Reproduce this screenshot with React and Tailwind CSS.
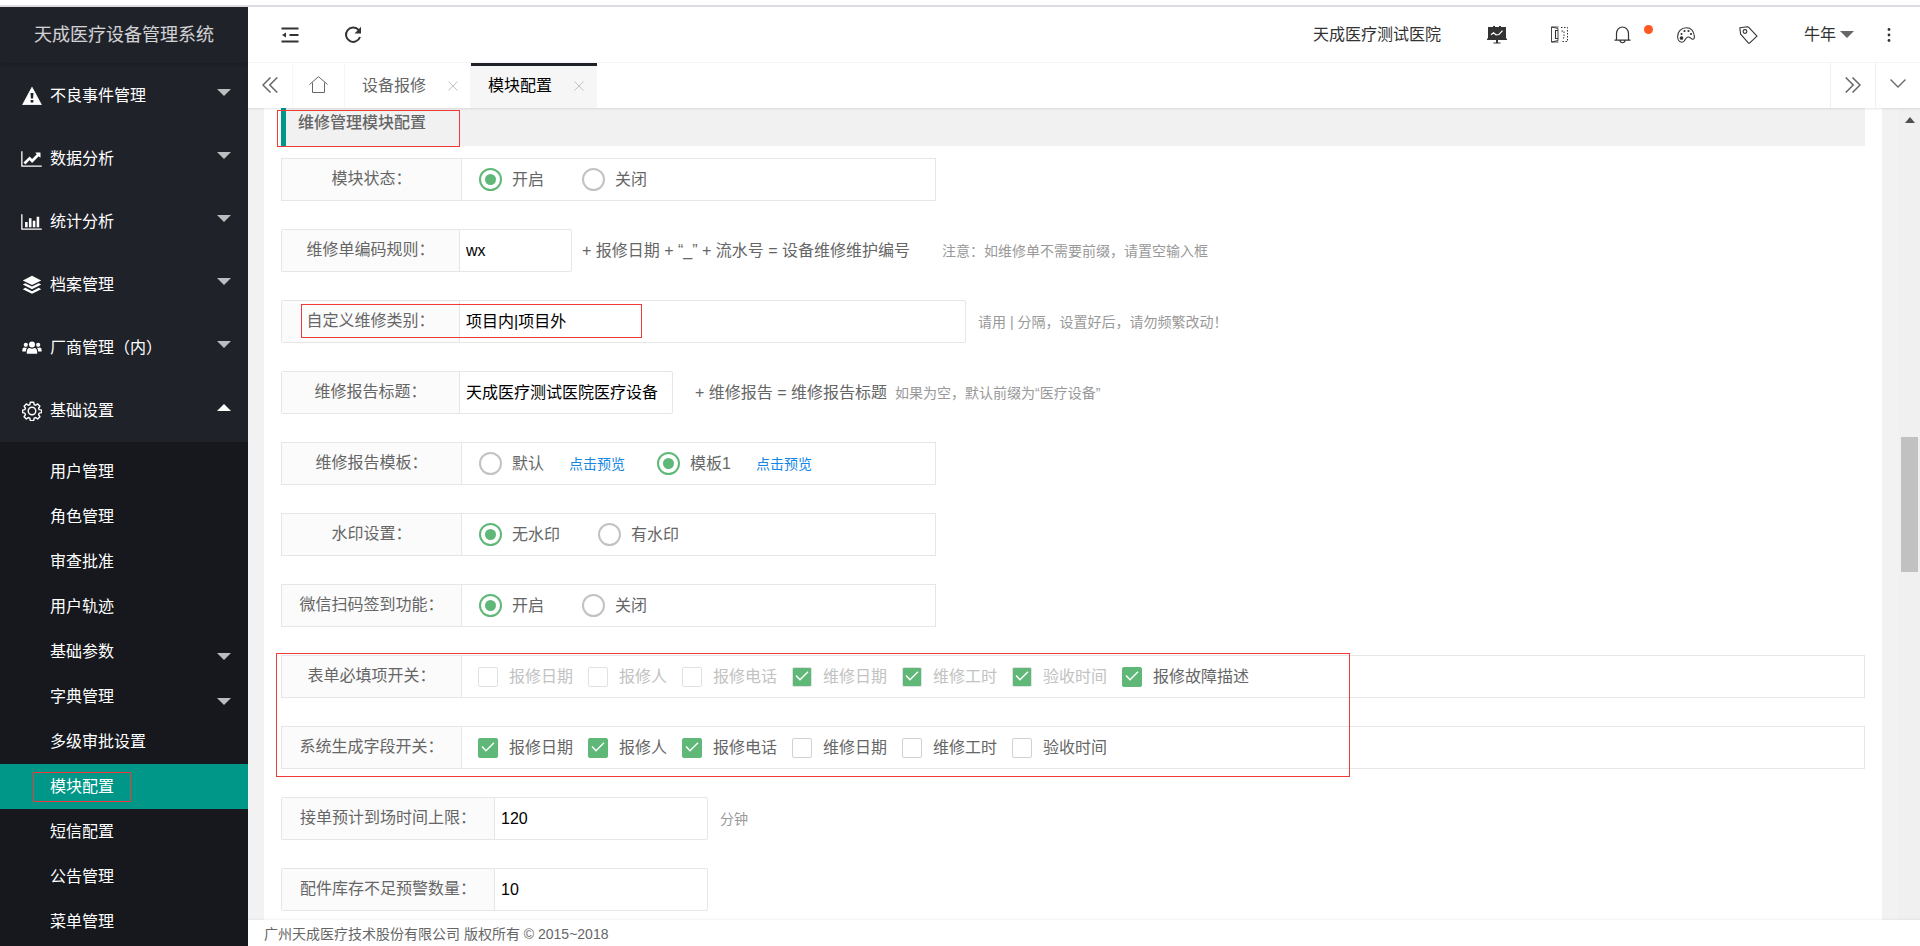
import { useState } from "react";
import clsx from "clsx";

const svgBase = { fill: "none", stroke: "currentColor" };

// Solid sidebar icons share the 1792/2048 grid
const SolidIcon = ({ viewBox, d, className = "w-[18px] h-[18px]" }) => (
  <svg viewBox={viewBox} className={className} fill="currentColor" aria-hidden="true">
    <path d={d} />
  </svg>
);

const WarningIcon = () => (
  <svg viewBox="0 0 20 18" className="w-5 h-[18px]" aria-hidden="true">
    <path d="M10 0.3 19.4 17.7H0.6Z" fill="currentColor" stroke="currentColor" strokeWidth="0.8" strokeLinejoin="round" />
    <path d="M8.5 6h3l-.4 5.5H8.9zM8.6 13h2.8v2.5H8.6z" fill="#20222a" />
  </svg>
);

const LineChartIcon = () => (
  <SolidIcon
    viewBox="0 0 2048 1792"
    className="w-[21px] h-[18px]"
    d="M2048 1536v128H0V128h128v1408h1920zM1920 288v435q0 21-19.5 29.5T1865 745l-121-121-633 633q-10 10-23 10t-23-10L832 1024l-416 416-192-192 585-585q10-10 23-10t23 10l233 233 464-464-121-121q-16-16-7.5-35.5T1453 256h435q14 0 23 9t9 23z"
  />
);

const BarChartIcon = () => (
  <SolidIcon
    viewBox="0 0 2048 1792"
    className="w-[21px] h-[18px]"
    d="M640 896v512H384V896h256zm384-384v896H768V512h256zm1024 1024v128H0V128h128v1408h1920zM1408 768v640h-256V768h256zm384-384v1024h-256V384h256z"
  />
);

const LayersIcon = () => (
  <svg viewBox="0 0 20 20" className="w-5 h-5" fill="currentColor" aria-hidden="true">
    <path d="M10 0.8 19.2 5.4 10 10 .8 5.4z" />
    <path d="M3.3 8.2 10 11.6l6.7-3.4 2.5 1.4L10 14.2.8 9.6z" />
    <path d="M3.3 12.8 10 16.2l6.7-3.4 2.5 1.4L10 18.8.8 14.2z" />
  </svg>
);

const UsersIcon = () => (
  <svg viewBox="0 0 20 14" className="w-5 h-[14px]" fill="currentColor" aria-hidden="true">
    <circle cx="10" cy="3.4" r="3" />
    <circle cx="3.8" cy="3.8" r="2.1" />
    <circle cx="16.2" cy="3.8" r="2.1" />
    <path d="M4.8 12.8c-.3-4 1.2-5.7 2.8-5.7 1.6 1 3.2 1 4.8 0 1.6 0 3.1 1.7 2.8 5.7z" />
    <path d="M.3 10.4C.1 7.9.9 6.5 2.2 6.5c1 .6 2 .7 3.3.1C4.3 7.7 3.9 9 3.9 10.4zM19.7 10.4c.2-2.5-.6-3.9-1.9-3.9-1 .6-2 .7-3.3.1 1.2 1.1 1.6 2.4 1.6 3.8z" />
  </svg>
);

const GearIcon = () => (
  <svg viewBox="0 0 24 24" className="w-5 h-5" {...svgBase} strokeWidth="1.7" strokeLinejoin="round" aria-hidden="true">
    <circle cx="12" cy="12" r="4.5" />
    <path d="M10 1.5h4l.6 2.9 1.7.7 2.5-1.6 2.7 2.7-1.6 2.5.7 1.7 2.9.6v3l-2.9.6-.7 1.7 1.6 2.5-2.7 2.7-2.5-1.6-1.7.7-.6 2.900h-4l-.6-2.9-1.7-.7-2.5 1.6-2.7-2.7 1.6-2.5-.7-1.7L.7 14v-3l2.7-.6.7-1.7-1.6-2.5 2.7-2.7 2.5 1.6 1.7-.7z" />
  </svg>
);

const Caret = ({ up = false, className = "text-[#bcbdbf]" }) => (
  <svg viewBox="0 0 14 7" className={clsx("w-[14px] h-[7px]", className)} fill="currentColor" aria-hidden="true">
    <path d={up ? "M0 7h14L7 0z" : "M0 0h14L7 7z"} />
  </svg>
);

const CloseIcon = () => (
  <svg viewBox="0 0 10 10" className="w-[10px] h-[10px] text-[#c2c2c2]" {...svgBase} aria-hidden="true">
    <path d="M.5.5l9 9M9.5.5l-9 9" />
  </svg>
);

const menus = [
  { label: "不良事件管理", icon: <WarningIcon /> },
  { label: "数据分析", icon: <LineChartIcon /> },
  { label: "统计分析", icon: <BarChartIcon /> },
  { label: "档案管理", icon: <LayersIcon /> },
  { label: "厂商管理（内）", icon: <UsersIcon /> },
  { label: "基础设置", icon: <GearIcon />, open: true },
];

const subMenus = [
  { label: "用户管理" },
  { label: "角色管理" },
  { label: "审查批准" },
  { label: "用户轨迹" },
  { label: "基础参数", children: true },
  { label: "字典管理", children: true },
  { label: "多级审批设置" },
  { label: "模块配置", active: true },
  { label: "短信配置" },
  { label: "公告管理" },
  { label: "菜单管理" },
];

const Sidebar = () => (
  <aside className="w-[248px] shrink-0 bg-[#20222a] text-white overflow-hidden">
    <div className="h-14 flex items-center justify-center text-lg text-white/80 shadow-[0_1px_2px_rgba(0,0,0,0.15)]">
      天成医疗设备管理系统
    </div>
    <nav className="pt-px">
      {menus.map((menu) => (
        <button key={menu.label} className="w-full h-[63px] pl-[21px] pr-[17px] flex items-center text-left">
          <span className="w-[21px] mr-2 flex justify-center">{menu.icon}</span>
          <span className="flex-1">{menu.label}</span>
          <span className="pb-1.5">
            {menu.open ? <Caret up className="text-white" /> : <Caret />}
          </span>
        </button>
      ))}
      <ul className="bg-[#16181d] pt-[7px] pb-20">
        {subMenus.map((item) => (
          <li key={item.label}>
            <a
              href="#"
              className={clsx(
                "h-[45px] pl-[50px] pr-[17px] flex items-center justify-between",
                item.active && "bg-[#009688]"
              )}
            >
              <span className="relative">
                {item.label}
                {item.active && (
                  <span className="absolute -inset-x-[17px] -inset-y-[3px] border border-[#f03a3a]"></span>
                )}
              </span>
              {item.children && (
                <span className="pt-2.5">
                  <Caret />
                </span>
              )}
            </a>
          </li>
        ))}
      </ul>
    </nav>
  </aside>
);

const HeaderButton = ({ label, children }) => (
  <button aria-label={label} className="w-[63px] h-full flex items-center justify-center">
    {children}
  </button>
);

const Header = () => (
  <header className="h-14 flex items-center bg-white border-b border-[#f6f6f6] text-[#333]">
    <button aria-label="侧边伸缩" className="w-[84px] h-full flex items-center justify-center">
      <svg viewBox="0 0 18 16" className="w-[18px] h-4" {...svgBase} strokeWidth="2" aria-hidden="true">
        <path d="M.5 1.5h17M8.5 8h9M.5 14.5h17" />
        <path d="M1 8l4-2.5v5z" fill="currentColor" stroke="none" />
      </svg>
    </button>
    <button aria-label="刷新" className="w-[42px] h-full flex items-center justify-center">
      <svg viewBox="0 0 18 18" className="w-[18px] h-[18px]" {...svgBase} strokeWidth="2" aria-hidden="true">
        <path d="M14.8 4.2A7.2 7.2 0 1 0 16 11" />
        <path d="M17 .8v6.7h-6.5z" fill="currentColor" stroke="none" />
      </svg>
    </button>

    <div className="ml-auto h-full flex items-center">
      <a href="#" className="pr-6">
        天成医疗测试医院
      </a>
      <HeaderButton label="大屏">
        <svg viewBox="0 0 20 18" className="w-5 h-[18px]" aria-hidden="true">
          <path d="M6 0h2v1h4V0h2v1h5v11.5h1v1.5h-9v2.5h2.5v1H6.5v-1H9V14H0v-1.5h1V1h5z" fill="#333" />
          <path d="M4 8.8l2.5-2 2.5 2 3-.3 3.500-3.800" stroke="#fff" fill="none" strokeWidth="1.2" />
        </svg>
      </HeaderButton>
      <HeaderButton label="手册">
        <svg viewBox="0 0 17 17" className="w-[17px] h-[17px]" {...svgBase} aria-hidden="true">
          <path d="M.5 1l6.500 1.500v12L.5 16zM.5 1h7M.5 16h7" strokeWidth="0.9" />
          <path d="M7 4.500H4.500v8H7" strokeWidth="1.1" />
          <path d="M10 1.500h6.500v14H10M10.500 5H13v7h-2.500" strokeDasharray="1.5 1.5" />
        </svg>
      </HeaderButton>
      <HeaderButton label="消息">
        <span className="relative">
          <svg viewBox="0 0 17 18" className="w-[17px] h-[18px]" {...svgBase} strokeWidth="1.2" aria-hidden="true">
            <path d="M2.500 14V7.500a6 6.500 0 0 1 12 0V14M.5 14.200h16M6 14.500c.3 3 4.700 3 5 0" />
          </svg>
          <span className="absolute -right-[22px] -top-px w-[9px] h-[9px] rounded-full bg-[#ff5722]"></span>
        </span>
      </HeaderButton>
      <HeaderButton label="主题">
        <svg viewBox="0 0 18 16" className="w-[18px] h-4" {...svgBase} strokeWidth="1.1" aria-hidden="true">
          <path d="M9.500.8C4 .8.6 5 .6 9.500c0 3.500 2 5.700 4.400 5.700 3.500 0 2.500-4.700 6-5.200 2.500-.3 2.800 2.500 5 2.300C17.300 12.200 17.500 10.500 17.300 9 16.600 4 13.500.8 9.500.8z" />
          <circle cx="4.500" cy="11" r="1.300" fill="currentColor" />
          <g fill="currentColor" stroke="none">
            <circle cx="4.500" cy="7" r="1" />
            <circle cx="7.500" cy="4" r="1.100" />
            <circle cx="11.500" cy="4" r="1.100" />
            <circle cx="14" cy="7" r="1.100" />
          </g>
        </svg>
      </HeaderButton>
      <HeaderButton label="便签">
        <svg viewBox="0 0 19 18" className="w-[19px] h-[18px]" {...svgBase} strokeWidth="1.1" aria-hidden="true">
          <path d="M.8 1.800 8.500.8 10 1.600 18 10.200l-7.500 7-1 0L1.600 8.200z" strokeLinejoin="round" />
          <circle cx="6" cy="5.500" r="1.900" />
        </svg>
      </HeaderButton>
      <button className="w-[77px] h-full pl-6 flex items-center gap-1">
        牛年
        <Caret className="text-[#666]" />
      </button>
      <HeaderButton label="更多">
        <svg viewBox="0 0 4 14" className="w-1 h-[14px]" fill="#333" aria-hidden="true">
          <circle cx="2" cy="1.500" r="1.400" />
          <circle cx="2" cy="7" r="1.400" />
          <circle cx="2" cy="12.500" r="1.400" />
        </svg>
      </HeaderButton>
    </div>
  </header>
);

const Tabs = () => (
  <div className="relative z-10 h-[45px] flex bg-white text-[#666] shadow-[0_1px_2px_rgba(0,0,0,0.1)]">
    <button aria-label="向左" className="w-[45px] pb-0.5 flex items-center justify-center border-r border-[#f6f6f6]">
      <svg viewBox="0 0 16 16" className="w-4 h-4" {...svgBase} strokeWidth="1.5" aria-hidden="true">
        <path d="M8.500.5 1 8l7.500 7.500M15.300.5 7.800 8l7.500 7.500" />
      </svg>
    </button>
    <button aria-label="主页" className="w-[52px] pb-0.5 flex items-center justify-center border-r border-[#f6f6f6]">
      <svg viewBox="0 0 19 17" className="w-[19px] h-[17px]" {...svgBase} aria-hidden="true">
        <path d="M.5 8.500 9.500.7l9 7.800M3.500 6.500v10h12v-10" />
      </svg>
    </button>
    <div className="w-[126px] pl-[17px] pr-3 flex items-center justify-between border-r border-[#f6f6f6]">
      <a href="#">设备报修</a>
      <button aria-label="关闭设备报修">
        <CloseIcon />
      </button>
    </div>
    <div className="w-[126px] pl-[17px] pr-[13px] flex items-center justify-between bg-[#f6f6f6] text-black shadow-[inset_0_3px_0_#20222a]">
      <a href="#">模块配置</a>
      <button aria-label="关闭模块配置">
        <CloseIcon />
      </button>
    </div>
    <button aria-label="向右" className="ml-auto w-[45px] pb-0.5 flex items-center justify-center border-l border-[#f0f0f0]">
      <svg viewBox="0 0 16 16" className="w-4 h-4" {...svgBase} strokeWidth="1.5" aria-hidden="true">
        <path d="M.7.5 8.200 8 .7 15.500M7.500.5 15 8l-7.500 7.500" />
      </svg>
    </button>
    <button aria-label="标签操作" className="w-[45px] pb-1 flex items-center justify-center border-l border-[#f0f0f0]">
      <svg viewBox="0 0 16 9" className="w-4 h-[9px]" {...svgBase} strokeWidth="1.3" aria-hidden="true">
        <path d="M.5.5 8 8 15.500.5" />
      </svg>
    </button>
  </div>
);

// Bordered row holding radios or checkboxes
const OptionRow = ({ label, wide = false, children }) => (
  <div
    role="group"
    aria-label={label}
    className={clsx("h-[43px] flex border border-[#e6e6e6]", !wide && "w-[655px]")}
  >
    <span className="w-[180px] shrink-0 pb-0.5 flex items-center justify-center bg-[#fbfbfb] border-r border-[#e6e6e6]">
      {label}：
    </span>
    <div className="flex items-center">{children}</div>
  </div>
);

const Radio = ({ name, value, selected, onSelect }) => (
  <label className="pl-[17px] pr-[21px] flex items-center gap-[10px]">
    <input
      type="radio"
      name={name}
      checked={selected === value}
      onChange={() => onSelect(value)}
      className="appearance-none grid place-content-center w-[23px] h-[23px] rounded-full border-2 border-[#c2c2c2] checked:border-[#5fb878] checked:before:block checked:before:w-[11px] checked:before:h-[11px] checked:before:rounded-full checked:before:bg-[#5fb878]"
    />
    {value}
  </label>
);

const RadioRow = ({ label, name, options, initial }) => {
  const [selected, setSelected] = useState(initial);

  return (
    <OptionRow label={label}>
      {options.map((option) => (
        <Radio key={option} name={name} value={option} selected={selected} onSelect={setSelected} />
      ))}
    </OptionRow>
  );
};

const TemplateRow = () => {
  const [selected, setSelected] = useState("模板1");

  return (
    <OptionRow label="维修报告模板">
      {["默认", "模板1"].map((option) => (
        <div key={option} className="flex items-center">
          <Radio name="template" value={option} selected={selected} onSelect={setSelected} />
          <a href="#" className="ml-1 mr-[15px] text-sm text-[#1287e6]">
            点击预览
          </a>
        </div>
      ))}
    </OptionRow>
  );
};

const Checkbox = ({ label, checked = false, disabled = false }) => (
  <label className={clsx("mr-[15px] flex items-center gap-[11px]", disabled && "text-[#c2c2c2]")}>
    <span className="grid place-items-center">
      <input
        type="checkbox"
        defaultChecked={checked}
        disabled={disabled}
        className="peer appearance-none col-start-1 row-start-1 w-5 h-5 rounded-xs border border-[#d2d2d2] bg-white checked:bg-[#5fb878] enabled:checked:border-[#5fb878] disabled:border-[#e2e2e2]"
      />
      <svg
        viewBox="0 0 14 10"
        className="col-start-1 row-start-1 w-[14px] h-[10px] mb-0.5 hidden peer-checked:block pointer-events-none"
        fill="none"
        stroke="#fff"
        strokeWidth="1.4"
        aria-hidden="true"
      >
        <path d="M1 4.500 5 8.800 13 .8" />
      </svg>
    </span>
    {label}
  </label>
);

const InputRow = ({ id, label, value, labelClass = "w-[178px]", inputClass, children }) => (
  <div className="flex items-center">
    <div className="h-[43px] flex border border-[#e6e6e6] rounded-xs">
      <label
        htmlFor={id}
        className={clsx("pb-0.5 flex items-center justify-center bg-[#fbfbfb] border-r border-[#e6e6e6]", labelClass)}
      >
        {label}：
      </label>
      <input id={id} type="text" defaultValue={value} className={clsx("pl-1.5 text-black outline-none", inputClass)} />
    </div>
    {children}
  </div>
);

const requiredFields = [
  { label: "报修日期", disabled: true },
  { label: "报修人", disabled: true },
  { label: "报修电话", disabled: true },
  { label: "维修日期", disabled: true, checked: true },
  { label: "维修工时", disabled: true, checked: true },
  { label: "验收时间", disabled: true, checked: true },
  { label: "报修故障描述", checked: true },
];

const systemFields = [
  { label: "报修日期", checked: true },
  { label: "报修人", checked: true },
  { label: "报修电话", checked: true },
  { label: "维修日期" },
  { label: "维修工时" },
  { label: "验收时间" },
];

const RepairForm = () => (
  <form className="flex-1 min-w-0 ml-4 mr-[17px] px-[17px] bg-white text-[#666] overflow-hidden">
    <div className="relative h-[38px] mb-3 pl-3 pb-2 flex items-center bg-[#f1f1f1] border-l-[5px] border-[#009688]">
      <h2 className="font-medium">维修管理模块配置</h2>
      <span className="absolute -left-[9px] top-0.5 w-[183px] h-[37px] border border-[#f03a3a]"></span>
    </div>

    <div className="flex flex-col gap-7">
      <RadioRow label="模块状态" name="status" options={["开启", "关闭"]} initial="开启" />

      <InputRow id="prefix" label="维修单编码规则" value="wx" inputClass="w-[111px]">
        <span className="ml-[10px]">+ 报修日期 + “_” + 流水号 = 设备维修维护编号</span>
        <span className="ml-8 text-sm text-[#999]">注意：如维修单不需要前缀，请置空输入框</span>
      </InputRow>

      <div className="relative">
        <InputRow id="category" label="自定义维修类别" value="项目内|项目外" inputClass="w-[505px]">
          <span className="ml-3 text-sm text-[#999]">请用 | 分隔，设置好后，请勿频繁改动！</span>
        </InputRow>
        <span className="absolute left-5 top-1 w-[341px] h-[34px] border border-[#f03a3a] pointer-events-none"></span>
      </div>

      <InputRow id="title" label="维修报告标题" value="天成医疗测试医院医疗设备" inputClass="w-[212px]">
        <span className="ml-[22px]">+ 维修报告 = 维修报告标题</span>
        <span className="ml-2 text-sm text-[#999]">如果为空，默认前缀为“医疗设备”</span>
      </InputRow>

      <TemplateRow />
      <RadioRow label="水印设置" name="watermark" options={["无水印", "有水印"]} initial="无水印" />
      <RadioRow label="微信扫码签到功能" name="wechat" options={["开启", "关闭"]} initial="开启" />

      <div className="relative flex flex-col gap-7">
        <OptionRow label="表单必填项开关" wide>
          <div className="pl-4 flex">
            {requiredFields.map((field) => (
              <Checkbox key={field.label} {...field} />
            ))}
          </div>
        </OptionRow>
        <OptionRow label="系统生成字段开关" wide>
          <div className="pl-4 flex">
            {systemFields.map((field) => (
              <Checkbox key={field.label} {...field} />
            ))}
          </div>
        </OptionRow>
        <span className="absolute -left-[5px] -top-0.5 w-[1074px] h-[124px] border border-[#f03a3a] pointer-events-none"></span>
      </div>

      <InputRow id="arrive" label="接单预计到场时间上限" value="120" labelClass="w-[213px]" inputClass="w-[212px]">
        <span className="ml-3 text-sm text-[#999]">分钟</span>
      </InputRow>
      <InputRow id="stock" label="配件库存不足预警数量" value="10" labelClass="w-[213px]" inputClass="w-[212px]" />
    </div>
  </form>
);

const ScrollTrack = () => (
  <div className="w-[21px] shrink-0 flex flex-col items-center bg-[#f0f0f0]" aria-hidden="true">
    <svg viewBox="0 0 10 6" className="w-[10px] h-1.5 mt-[9px]" fill="#505050">
      <path d="M0 6h10L5 0z" />
    </svg>
    <div className="mt-[314px] w-[17px] h-[135px] bg-[#c1c1c1]"></div>
  </div>
);

export default function App() {
  return (
    <div className="h-screen flex flex-col overflow-hidden bg-white text-base font-['Liberation_Sans','Noto_Sans_CJK_SC',sans-serif]">
      <div className="h-[7px] shrink-0 border-b-2 border-[#dcdce2]"></div>
      <div className="flex-1 min-h-0 flex">
        <Sidebar />
        <div className="flex-1 min-w-0 flex flex-col">
          <Header />
          <Tabs />
          <main className="flex-1 min-h-0 flex bg-[#f2f2f2] overflow-hidden">
            <RepairForm />
            <ScrollTrack />
          </main>
          <footer className="relative h-[26px] shrink-0 pl-4 pt-0.5 flex items-center bg-white text-sm text-[#666] shadow-[0_-1px_2px_rgba(0,0,0,0.05)]">
            广州天成医疗技术股份有限公司 版权所有 © 2015~2018
          </footer>
        </div>
      </div>
    </div>
  );
}
